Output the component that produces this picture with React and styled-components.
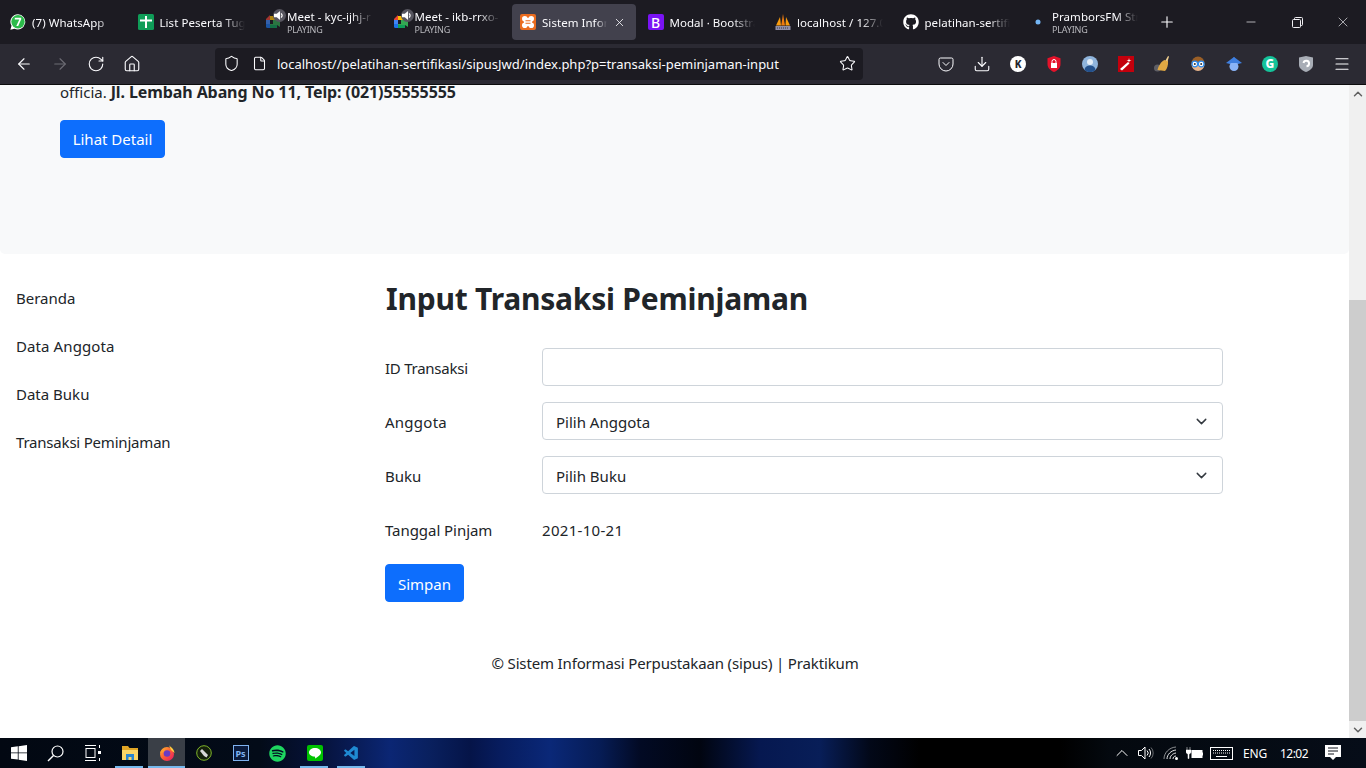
import React from 'react'
import styled, { createGlobalStyle } from 'styled-components'
import { ArrowLeft, ArrowRight, RotateCw, Home, Shield, File, Star, Download, Menu, Plus, X, Minus, ChevronDown, ChevronUp } from 'lucide-react'
import { FaGithub, FaSpotify } from 'react-icons/fa'
import { VscVscode } from 'react-icons/vsc'

const GlobalStyle = createGlobalStyle`
    html, body {
        margin: 0;
        height: 100%;
        overflow: hidden;
        background: #fff;
    }
    * {
        box-sizing: border-box;
    }
`;

const Screen = styled.div`
    width: 1366px;
    height: 768px;
    display: flex;
    flex-direction: column;
    overflow: hidden;
    font-family: "Noto Sans", "Open Sans", sans-serif;
    color: #212529;
`;

/* firefox tab strip */
const TabBar = styled.div`
    height: 44px;
    display: flex;
    align-items: center;
    background: #1c1b22;
    flex-shrink: 0;
`;

const Tab = styled.div`
    width: ${p => p.$active ? 124 : 127.5}px;
    height: 36px;
    padding: 0 10px 0 ${p => p.$active ? 8 : 10}px;
    margin-left: ${p => p.$active ? 2 : 0}px;
    margin-right: ${p => p.$active ? 1.5 : 0}px;
    display: flex;
    align-items: center;
    gap: 6px;
    border-radius: 4px;
    background: ${p => p.$active ? '#42414d' : 'transparent'};
    color: #fbfbfe;
`;

const Fav = styled.span`
    width: 16px;
    height: 16px;
    flex-shrink: 0;
    display: flex;
    align-items: center;
    justify-content: center;
    position: relative;
`;

const AudioBadge = styled.span`
    position: absolute;
    top: -5px;
    right: -5px;
    width: 13px;
    height: 13px;
    border-radius: 50%;
    background: #56555f;
    display: flex;
    align-items: center;
    justify-content: center;
`;

const TabText = styled.div`
    flex: 1;
    min-width: 0;
    overflow: hidden;
    white-space: nowrap;
    mask-image: linear-gradient(to right, #000 ${p => p.$active ? 84 : 74}%, transparent 100%);
`;

const TabTitle = styled.div`
    font-size: 11.5px;
    line-height: 15px;
    letter-spacing: 0.05px;
`;

const TabSub = styled.div`
    font-size: 9px;
    line-height: 11px;
    color: #b8b8bd;
    letter-spacing: -0.2px;
`;

const NewTab = styled.div`
    width: 28px;
    height: 28px;
    margin-left: 5px;
    display: flex;
    align-items: center;
    justify-content: center;
    color: #fbfbfe;
`;

const WindowControls = styled.div`
    margin-left: auto;
    display: flex;
    height: 100%;
`;

const WindowButton = styled.div`
    width: 46px;
    height: 100%;
    display: flex;
    align-items: center;
    justify-content: center;
    color: #f0f0f4;
`;

const RestoreIcon = () => (
    <svg width="11" height="11" viewBox="0 0 11 11" fill="none" stroke="#f0f0f4">
        <rect x="0.5" y="2.5" width="8" height="8" rx="1" />
        <path d="M2.5 2.5V1.5a1 1 0 0 1 1-1h6a1 1 0 0 1 1 1v6a1 1 0 0 1-1 1h-1" />
    </svg>
)

/* toolbar */
const Toolbar = styled.div`
    height: 41px;
    display: flex;
    align-items: center;
    padding-left: 6px;
    padding-bottom: 1px;
    background: #2b2a33;
    border-bottom: 1px solid #0c0c0d;
    flex-shrink: 0;
`;

const ToolButton = styled.div`
    width: 36px;
    height: 32px;
    display: flex;
    align-items: center;
    justify-content: center;
    flex-shrink: 0;
    color: ${p => p.$dim ? '#6d6c74' : '#fbfbfe'};
`;

const UrlBar = styled.div`
    width: 648px;
    height: 32px;
    margin: 0 65px;
    display: flex;
    align-items: center;
    border-radius: 4px;
    background: #1c1b22;
    color: #fbfbfe;
    flex-shrink: 0;
`;

const UrlIcon = styled.span`
    width: ${p => p.$w}px;
    display: flex;
    justify-content: center;
    flex-shrink: 0;
`;

const UrlText = styled.div`
    flex: 1;
    padding-left: 6px;
    font-size: 13px;
    white-space: nowrap;
    letter-spacing: -0.01px;
`;

const KBadge = styled.span`
    width: 16px;
    height: 16px;
    border-radius: 50%;
    background: #fff;
    color: #26252c;
    font-size: 10px;
    font-weight: 800;
    display: flex;
    align-items: center;
    justify-content: center;
`;

const GBadge = styled(KBadge)`
    background: #15c39a;
    color: #fff;
    font-size: 12px;
`;

/* page */
const Viewport = styled.div`
    flex: 1;
    min-height: 0;
    display: flex;
`;

const Page = styled.div`
    flex: 1;
    min-width: 0;
    overflow: hidden;
    background: #fff;
`;

const Hero = styled.div`
    height: 174px;
    margin-top: -5px;
    padding: 0 60px;
    background: #f8f9fa;
    border-radius: 0 0 5px 5px;
`;

const HeroText = styled.p`
    margin: 0 0 16px;
    font-size: 15px;
    line-height: 24px;
    strong {
        font-size: 16px;
        font-weight: 700;
        letter-spacing: -0.1px;
    }
`;

const Button = styled.button`
    height: 38px;
    width: ${p => p.$w}px;
    padding: ${p => p.$pt || 0}px 0 0;
    border: 1px solid #0d6efd;
    border-radius: 4px;
    background: #0d6efd;
    color: #fff;
    font-family: inherit;
    font-size: 15px;
    display: block;
`;

const Columns = styled.div`
    display: flex;
`;

const Sidebar = styled.nav`
    width: 385px;
    padding-top: 24px;
    flex-shrink: 0;
`;

const SideLink = styled.a`
    display: block;
    height: 40px;
    margin-bottom: 8px;
    padding: 8px 16px;
    font-size: 15px;
    line-height: 24px;
    letter-spacing: ${p => p.$track || 0}px;
    color: #212529;
`;

const Main = styled.main`
    width: 838px;
    padding-top: 26px;
`;

const Title = styled.h1`
    margin: 0 0 30px;
    padding-left: 1px;
    font-size: 30px;
    line-height: 38px;
    font-weight: 700;
    letter-spacing: -0.23px;
`;

const FormRow = styled.div`
    height: 38px;
    margin-bottom: 16px;
    display: flex;
    align-items: center;
    font-size: 15px;
`;

const Label = styled.label`
    width: 157px;
    padding-top: 2px;
    flex-shrink: 0;
    letter-spacing: ${p => p.$track || 0}px;
`;

const Control = styled.div`
    flex: 1;
    height: 38px;
    padding: 0 12px 0 13px;
    display: flex;
    align-items: center;
    justify-content: space-between;
    border: 1px solid #ced4da;
    border-radius: 4px;
    background: #fff;
    font-size: 15px;
`;

const ControlValue = styled.span`
    padding-top: 2px;
`;

const DateValue = styled.span`
    padding-top: 2px;
    letter-spacing: 0.3px;
`;

const Footer = styled.footer`
    margin-top: 49px;
    font-size: 15px;
    line-height: 24px;
    letter-spacing: -0.15px;
    text-align: center;
    padding-left: 1px;
`;

/* scrollbar */
const Scrollbar = styled.div`
    width: 17px;
    display: flex;
    flex-direction: column;
    background: #f0f0f0;
    flex-shrink: 0;
`;

const ScrollArrow = styled.div`
    height: 17px;
    display: flex;
    align-items: center;
    justify-content: center;
    color: #606060;
`;

const ScrollSpace = styled.div`
    height: 198px;
`;

const ScrollThumb = styled.div`
    flex: 1;
    background: #cdcdcd;
`;

/* windows taskbar */
const Taskbar = styled.div`
    height: 30px;
    display: flex;
    align-items: center;
    flex-shrink: 0;
    background: linear-gradient(to right, #020812 0, #030b18 260px, #06123a 320px, #0b2674 390px, #09205e 430px, #051448 470px, #071c5e 500px, #0a2878 550px, #061c55 600px, #020a24 640px, #010510 700px, #061850 760px, #081e58 820px, #020818 870px, #000 920px, #000 1060px, #04090f 1110px, #060d18 1366px);
`;

const TaskButton = styled.div`
    width: 37px;
    height: 100%;
    display: flex;
    align-items: center;
    justify-content: center;
    position: relative;
    background: ${p => p.$active ? '#3a3f47' : 'transparent'};
    color: #fff;
    &::after {
        content: '';
        display: ${p => p.$open ? 'block' : 'none'};
        position: absolute;
        left: ${p => p.$active ? 0 : 4}px;
        right: ${p => p.$active ? 0 : 5}px;
        bottom: 0;
        height: 2px;
        background: #76b9ed;
    }
`;

const PsBox = styled.span`
    width: 16px;
    height: 16px;
    border: 1px solid #7fb2f0;
    background: #0a1a3c;
    color: #7fb2f0;
    font-size: 9px;
    font-weight: 700;
    display: flex;
    align-items: center;
    justify-content: center;
`;

const Tray = styled.div`
    margin-left: auto;
    height: 100%;
    display: flex;
    align-items: center;
    padding-right: 14px;
    color: #fff;
`;

const TrayItem = styled.div`
    width: ${p => p.$w}px;
    display: flex;
    justify-content: center;
    align-items: center;
    font-size: 12px;
    letter-spacing: ${p => p.$track || -0.2}px;
`;

const BootstrapBadge = styled.span`
    width: 16px;
    height: 16px;
    border-radius: 2px;
    background: #7a13f5;
    color: #fff;
    font-size: 14px;
    font-weight: 500;
    display: flex;
    align-items: center;
    justify-content: center;
`;

const WhatsAppIcon = () => (
    <Fav>
        <svg width="16" height="16" viewBox="0 0 16 16">
            <path d="M8 .2a7.600 7.600 0 0 0-6.500 11.500L.4 15.700l4.100-1A7.600 7.600 0 1 0 8 .2z" fill="#fff" />
            <circle cx="8" cy="7.800" r="6.700" fill="#2bbb4a" />
            <path d="M4.800 3.800h6.400v1.500L8.200 12H6.300l3-6.500H4.800z" fill="#fff" />
        </svg>
    </Fav>
)

const SheetIcon = () => (
    <Fav>
        <svg width="16" height="16" viewBox="0 0 16 16">
            <rect width="16" height="16" rx="1.500" fill="#0f9d58" />
            <path d="M7 2h2v3.500h5v2H9V14H7V7.500H2v-2h5z" fill="#fff" />
        </svg>
    </Fav>
)

const MeetIcon = ({ muted }) => (
    <Fav>
        <svg width="16" height="16" viewBox="0 0 16 16" style={{ opacity: muted ? 0.65 : 1 }}>
            <path d="M1 5l4-4v5H1z" fill="#ea4335" />
            <path d="M1 6h4v4H1z" fill="#4285f4" />
            <path d="M1 10h4v4H2.500Q1 14 1 12.500z" fill="#1a73e8" />
            <path d="M5 2h7v4l3-2v9l-3-2v3H5v-4h3V6H5z" fill="#34a853" />
            <path d="M5 11h7v3H5z" fill="#0f9d58" />
            <path d="M5 2h7v4H5z" fill="#fbbc04" />
        </svg>
        <AudioBadge>
            <svg width="11" height="11" viewBox="0 0 10 10" fill="#fff">
                <path d="M0 3.500h2.500L5.500 1v8L2.500 6.500H0z" />
                <path d="M6.500 3a3 3 0 0 1 0 4" stroke="#fff" fill="none" />
            </svg>
        </AudioBadge>
    </Fav>
)

const XamppIcon = () => (
    <Fav>
        <svg width="16" height="16" viewBox="0 0 16 16">
            <rect width="16" height="16" rx="2" fill="#ea6c1f" />
            <circle cx="4.800" cy="4.800" r="2.800" fill="#fff" />
            <circle cx="11.200" cy="4.800" r="2.800" fill="#fff" />
            <circle cx="4.800" cy="11.200" r="2.800" fill="#fff" />
            <circle cx="11.200" cy="11.200" r="2.800" fill="#fff" />
            <rect x="4" y="4" width="8" height="8" fill="#fff" />
            <path d="M5.500 6.300h5v1h-5zM5.500 8.700h5v1h-5z" fill="#ea6c1f" />
        </svg>
    </Fav>
)

const PmaIcon = () => (
    <Fav>
        <svg width="16" height="16" viewBox="0 0 16 16">
            <path d="M1 11.500L5 3l1 8.500z" fill="#f89c0e" />
            <path d="M6.200 11.500L8 0l2 11.500z" fill="#ee7b0f" />
            <path d="M10.500 11.500L11 3l4 8.500z" fill="#f89c0e" />
            <path d="M.5 12h15v4H.5z" fill="#8e8ea8" />
            <path d="M2 14h12" stroke="#3a3942" strokeDasharray="1 1" />
        </svg>
    </Fav>
)

const PocketIcon = () => (
    <svg width="16" height="16" viewBox="0 0 16 16" fill="none" stroke="#fbfbfe" strokeWidth="1">
        <path d="M2.500 2h11A1.500 1.500 0 0 1 15 3.500V8A7 7 0 0 1 1 8V3.500A1.500 1.500 0 0 1 2.500 2z" />
        <path d="M5 6.500l3 3 3-3" strokeLinecap="round" />
    </svg>
)

const LockShield = () => (
    <svg width="16" height="16" viewBox="0 0 16 16">
        <path d="M8 0l6.500 2.200V8c0 4-3 6.500-6.500 8-3.500-1.500-6.500-4-6.500-8V2.200z" fill="#e4122a" />
        <path d="M5 7h6v5H5z" fill="#fff" />
        <path d="M6 7V5.500a2 2 0 0 1 4 0V7" fill="none" stroke="#fff" />
    </svg>
)

const AvatarIcon = () => (
    <svg width="16" height="16" viewBox="0 0 16 16">
        <circle cx="8" cy="8" r="8" fill="#8fb4dc" />
        <circle cx="8" cy="6" r="3" fill="#e3ecf6" />
        <path d="M2.500 14c.5-3.500 3-4.500 5.500-4.500s5 1 5.500 4.500A8 8 0 0 1 2.500 14z" fill="#24518c" />
    </svg>
)

const WandIcon = () => (
    <svg width="16" height="16" viewBox="0 0 16 16">
        <rect width="16" height="16" fill="#c4000c" />
        <path d="M2 13l8-7 1.500 1.500-7.500 7z" fill="#fff" />
        <path d="M11 2l.5 2 2 .5-2 .5-.5 2-.5-2-2-.5 2-.5z" fill="#fff" />
    </svg>
)

const BroomIcon = () => (
    <svg width="16" height="16" viewBox="0 0 16 16">
        <circle cx="3.500" cy="12" r="3.500" fill="#5f5f66" />
        <path d="M3.500 14c1-5 4.500-9 7-10l3.500 1c.5 4-1 8-3 10z" fill="#e0a843" />
        <path d="M11.500 4.500L14 0l1 .5-1.500 5z" fill="#f0cf8e" />
    </svg>
)

const GlassesIcon = () => (
    <svg width="16" height="16" viewBox="0 0 16 16">
        <circle cx="8" cy="8.500" r="6.500" fill="#e8b48a" />
        <path d="M1.500 7a6.500 6.500 0 0 1 13 0z" fill="#9a5f27" />
        <circle cx="4.800" cy="8" r="2.800" fill="#fff" stroke="#2b8bf0" strokeWidth="1.200" />
        <circle cx="11.200" cy="8" r="2.800" fill="#fff" stroke="#2b8bf0" strokeWidth="1.200" />
        <circle cx="4.800" cy="8" r="1" fill="#333" />
        <circle cx="11.200" cy="8" r="1" fill="#333" />
    </svg>
)

const ScholarIcon = () => (
    <svg width="16" height="16" viewBox="0 0 16 16">
        <path d="M8 1l8 6-8 2-8-2z" fill="#3f7fe0" />
        <circle cx="8" cy="10.500" r="4.500" fill="#8ab4f8" />
        <path d="M3.500 7l4.500-6 4.500 6z" fill="#3f7fe0" />
    </svg>
)

const GreyShield = () => (
    <svg width="14" height="16" viewBox="0 0 14 16">
        <path d="M0 1.500L7 0l7 1.500V9c0 3-3 5.500-7 7-4-1.500-7-4-7-7z" fill="#a8adb6" />
        <path d="M4.500 7a2.800 2.800 0 1 1 3 3.300" fill="none" stroke="#fff" strokeWidth="2" />
    </svg>
)

const WindowsIcon = () => (
    <svg width="16" height="16" viewBox="0 0 16 16" fill="#fff">
        <path d="M0 2.300l6.800-1v6.200H0zM7.600 1.200L16 0v7.500H7.600zM0 8.300h6.800v6.300L0 13.700zM7.600 8.300H16V16l-8.400-1.200z" />
    </svg>
)

const SearchIcon = () => (
    <svg width="17" height="17" viewBox="0 0 17 17" fill="none" stroke="#fff" strokeWidth="1.200">
        <circle cx="10.500" cy="6.500" r="5.500" />
        <path d="M6.500 10.500L1 16" strokeWidth="1.500" />
    </svg>
)

const TaskViewIcon = () => (
    <svg width="16" height="16" viewBox="0 0 16 16" fill="none" stroke="#fff">
        <path d="M0 .5h11M0 15.500h11" />
        <rect x="1" y="3.500" width="9" height="9" />
        <path d="M14.500 0v3M14.500 13v3" />
        <rect x="13" y="6" width="3" height="3" fill="#fff" stroke="none" />
    </svg>
)

const FolderIcon = () => (
    <svg width="16" height="16" viewBox="0 0 16 16">
        <path d="M0 1h6l1.500 2H16v3H0z" fill="#e0a526" />
        <path d="M0 5h16v10H0z" fill="#fbd667" />
        <path d="M4 9h8v6H9.500v-3h-3v3H4z" fill="#2a86d0" />
    </svg>
)

const FirefoxIcon = () => (
    <svg width="16" height="16" viewBox="0 0 16 16">
        <defs>
            <linearGradient id="ffg" x1="0" y1="0" x2="1" y2="1">
                <stop offset="0" stopColor="#ffbd2f" />
                <stop offset="0.5" stopColor="#ff5a36" />
                <stop offset="1" stopColor="#e3136e" />
            </linearGradient>
        </defs>
        <circle cx="8" cy="9" r="7" fill="url(#ffg)" />
        <path d="M10 0c1 2 5 3 5.500 8L12 5z" fill="#ffcf3f" />
        <circle cx="8" cy="8.500" r="3.300" fill="#6a3bc4" />
        <path d="M1 8c1-3 3-4 5-4l-1 3z" fill="#ff9a2f" />
    </svg>
)

const InkIcon = () => (
    <svg width="16" height="16" viewBox="0 0 16 16">
        <circle cx="8" cy="8" r="7.300" fill="#15200c" stroke="#7fb52a" />
        <path d="M4 6l2-2 6 6-1.500 2.500L8 11z" fill="#d8d8d8" />
    </svg>
)

const LineIcon = () => (
    <svg width="16" height="16" viewBox="0 0 16 16">
        <rect width="16" height="16" rx="2" fill="#00c300" />
        <path d="M8 3c3.300 0 6 1.900 6 4.400 0 2.300-3.200 4.600-6 6 .3-1 .2-1.700-.5-1.900C4.500 11.200 2 9.700 2 7.400 2 4.900 4.700 3 8 3z" fill="#fff" />
    </svg>
)

const SpeakerIcon = () => (
    <svg width="16" height="16" viewBox="0 0 16 16" fill="none" stroke="#fff">
        <path d="M.5 5.500h3L7 2v12L3.500 10.500h-3z" />
        <path d="M9 5.500a3.500 3.500 0 0 1 0 5M11 4a6 6 0 0 1 0 8" />
        <path d="M13 2.500a8 8 0 0 1 0 11" opacity="0.4" />
    </svg>
)

const WifiIcon = () => (
    <svg width="16" height="16" viewBox="0 0 16 16" fill="none" stroke="#fff" strokeWidth="0.900">
        <path d="M1 14C1 8 6 2.500 13 2" opacity="0.6" />
        <path d="M4 14c0-4.500 4-8.500 9-9" />
        <path d="M7 14c0-3 2.500-5.500 6-6" />
        <path d="M10 14c0-1.500 1-3 3-3" />
        <circle cx="13.500" cy="13.500" r="1.500" fill="#fff" stroke="none" />
    </svg>
)

const BatteryIcon = () => (
    <svg width="17" height="14" viewBox="0 0 17 14">
        <path d="M1 1v3M4 1v3M0 4h5v2.500L3 8.500v4H2v-4L0 6.500z" fill="#fff" stroke="#fff" strokeWidth="0.500" />
        <rect x="6" y="4.500" width="10" height="7" fill="#fff" stroke="#fff" />
        <rect x="16" y="6.500" width="1" height="3" fill="#fff" />
    </svg>
)

const KeyboardIcon = () => (
    <svg width="23" height="13" viewBox="0 0 23 13" fill="none" stroke="#fff">
        <rect x="0.500" y="0.500" width="22" height="12" />
        <path d="M3 3.500h17M3 6h17" strokeDasharray="1 1" />
        <path d="M6 9.500h11" />
    </svg>
)

const NotifyIcon = () => (
    <svg width="16" height="16" viewBox="0 0 16 16">
        <path d="M0 0h16v12h-5l-3 3-3-3H0z" fill="#fff" />
        <path d="M3 3h10M3 6h10M3 9h6" stroke="#10151c" />
    </svg>
)

const icon = { size: 18, strokeWidth: 1.5 }

const tabs = [
    { icon: <WhatsAppIcon />, title: '(7) WhatsApp' },
    { icon: <SheetIcon />, title: 'List Peserta Tuga' },
    { icon: <MeetIcon muted />, title: 'Meet - kyc-ijhj-r', sub: 'PLAYING' },
    { icon: <MeetIcon />, title: 'Meet - ikb-rrxo-', sub: 'PLAYING' },
    { icon: <XamppIcon />, title: 'Sistem Inform', active: true },
    { icon: <Fav><BootstrapBadge>B</BootstrapBadge></Fav>, title: 'Modal · Bootstra' },
    { icon: <PmaIcon />, title: 'localhost / 127.0' },
    { icon: <Fav><FaGithub size={16} color="#fff" /></Fav>, title: 'pelatihan-sertifik' },
]

function App() {
    return (
        <Screen>
            <GlobalStyle />
            <TabBar>
                {tabs.map(t => (
                    <Tab key={t.title} $active={t.active}>
                        {t.icon}
                        <TabText $active={t.active}>
                            <TabTitle>{t.title}</TabTitle>
                            {t.sub && <TabSub>{t.sub}</TabSub>}
                        </TabText>
                        {t.active && <X size={13} strokeWidth={1.5} />}
                    </Tab>
                ))}
                <Tab>
                    <Fav><svg width="6" height="6"><circle cx="3" cy="3" r="2.500" fill="#74b6f5" /></svg></Fav>
                    <TabText>
                        <TabTitle>PramborsFM Str</TabTitle>
                        <TabSub>PLAYING</TabSub>
                    </TabText>
                </Tab>
                <NewTab><Plus size={18} strokeWidth={1.5} /></NewTab>
                <WindowControls>
                    <WindowButton><Minus size={14} strokeWidth={1.2} /></WindowButton>
                    <WindowButton><RestoreIcon /></WindowButton>
                    <WindowButton><X size={16} strokeWidth={1} /></WindowButton>
                </WindowControls>
            </TabBar>
            <Toolbar>
                <ToolButton><ArrowLeft {...icon} /></ToolButton>
                <ToolButton $dim><ArrowRight {...icon} /></ToolButton>
                <ToolButton><RotateCw {...icon} /></ToolButton>
                <ToolButton><Home {...icon} /></ToolButton>
                <UrlBar>
                    <UrlIcon $w={32}><Shield size={17} strokeWidth={1.5} /></UrlIcon>
                    <UrlIcon $w={24}><File size={15} strokeWidth={1.7} /></UrlIcon>
                    <UrlText>localhost//pelatihan-sertifikasi/sipusJwd/index.php?p=transaksi-peminjaman-input</UrlText>
                    <UrlIcon $w={32}><Star size={17} strokeWidth={1.5} /></UrlIcon>
                </UrlBar>
                <ToolButton><PocketIcon /></ToolButton>
                <ToolButton><Download {...icon} /></ToolButton>
                <ToolButton><KBadge>K</KBadge></ToolButton>
                <ToolButton><LockShield /></ToolButton>
                <ToolButton><AvatarIcon /></ToolButton>
                <ToolButton><WandIcon /></ToolButton>
                <ToolButton><BroomIcon /></ToolButton>
                <ToolButton><GlassesIcon /></ToolButton>
                <ToolButton><ScholarIcon /></ToolButton>
                <ToolButton><GBadge>G</GBadge></ToolButton>
                <ToolButton><GreyShield /></ToolButton>
                <ToolButton><Menu {...icon} /></ToolButton>
            </Toolbar>
            <Viewport>
                <Page>
                    <Hero>
                        <HeroText>officia. <strong>Jl. Lembah Abang No 11, Telp: (021)55555555</strong></HeroText>
                        <Button $w={105}>Lihat Detail</Button>
                    </Hero>
                    <Columns>
                        <Sidebar>
                            <SideLink>Beranda</SideLink>
                            <SideLink $track={0.1}>Data Anggota</SideLink>
                            <SideLink>Data Buku</SideLink>
                            <SideLink $track={-0.2}>Transaksi Peminjaman</SideLink>
                        </Sidebar>
                        <Main>
                            <Title>Input Transaksi Peminjaman</Title>
                            <FormRow>
                                <Label $track={-0.25}>ID Transaksi</Label>
                                <Control />
                            </FormRow>
                            <FormRow>
                                <Label $track={0.25}>Anggota</Label>
                                <Control>
                                    <ControlValue>Pilih Anggota</ControlValue>
                                    <ChevronDown size={17} strokeWidth={2} color="#343a40" />
                                </Control>
                            </FormRow>
                            <FormRow>
                                <Label>Buku</Label>
                                <Control>
                                    <ControlValue>Pilih Buku</ControlValue>
                                    <ChevronDown size={17} strokeWidth={2} color="#343a40" />
                                </Control>
                            </FormRow>
                            <FormRow>
                                <Label $track={-0.05}>Tanggal Pinjam</Label>
                                <DateValue>2021-10-21</DateValue>
                            </FormRow>
                            <Button $w={79} $pt={2}>Simpan</Button>
                        </Main>
                    </Columns>
                    <Footer>© Sistem Informasi Perpustakaan (sipus) | Praktikum</Footer>
                </Page>
                <Scrollbar>
                    <ScrollArrow><ChevronUp size={14} strokeWidth={2.5} /></ScrollArrow>
                    <ScrollSpace />
                    <ScrollThumb />
                    <ScrollArrow><ChevronDown size={14} strokeWidth={2.5} /></ScrollArrow>
                </Scrollbar>
            </Viewport>
            <Taskbar>
                <TaskButton><WindowsIcon /></TaskButton>
                <TaskButton><SearchIcon /></TaskButton>
                <TaskButton><TaskViewIcon /></TaskButton>
                <TaskButton $open><FolderIcon /></TaskButton>
                <TaskButton $open $active><FirefoxIcon /></TaskButton>
                <TaskButton><InkIcon /></TaskButton>
                <TaskButton><PsBox>Ps</PsBox></TaskButton>
                <TaskButton><FaSpotify size={17} color="#1ed760" /></TaskButton>
                <TaskButton $open><LineIcon /></TaskButton>
                <TaskButton $open><VscVscode size={17} color="#1f8ad2" /></TaskButton>
                <Tray>
                    <TrayItem $w={24}><ChevronUp size={20} strokeWidth={1.2} /></TrayItem>
                    <TrayItem $w={24}><SpeakerIcon /></TrayItem>
                    <TrayItem $w={25}><WifiIcon /></TrayItem>
                    <TrayItem $w={23}><BatteryIcon /></TrayItem>
                    <TrayItem $w={30}><KeyboardIcon /></TrayItem>
                    <TrayItem $w={38}>ENG</TrayItem>
                    <TrayItem $w={40} $track={-0.5}>12:02</TrayItem>
                    <TrayItem $w={38}><NotifyIcon /></TrayItem>
                </Tray>
            </Taskbar>
        </Screen>
    )
}

export default App
